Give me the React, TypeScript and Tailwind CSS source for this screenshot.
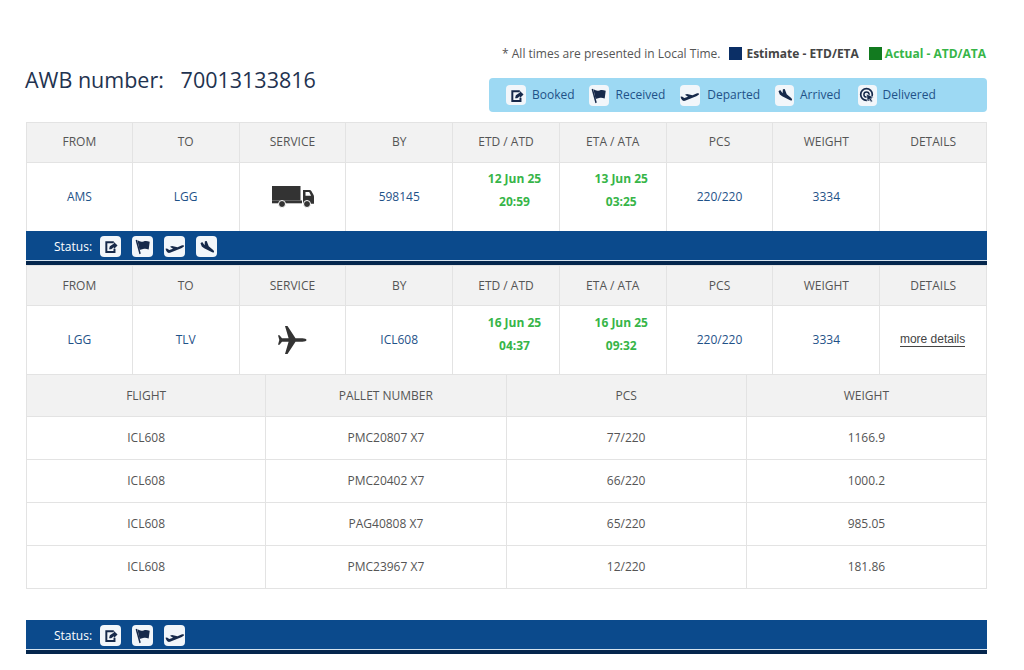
import React from "react";

const F = '[font-family:"Open_Sans",sans-serif]';
const C = "#16294a";

function Booked() {
  return (
    <svg viewBox="0 0 16 16" className="w-[15px] h-[15px]">
      <path d="M2.500 2.500h9v2H4.600v8.300h6.600v-2.400h2.100v4.500h-10.800z" fill={C} />
      <path d="M6.500 11l.8-3.200 4.400-3V3.200L15.500 7l-3.800 3.600V8.900l-3 2.100z" fill={C} />
    </svg>
  );
}
function Flag() {
  return (
    <svg viewBox="0 0 16 16" className="w-[17px] h-[17px]">
      <path d="M1.500 2.200l1.300-.5 3.600 13-1.300.5z" fill={C} />
      <path d="M3.200 2.200c2.300 1.400 3.800 1.500 5.800 1 1.800-.4 3.400-.4 5.800.4l-1 7.200c-2.300-.9-3.800-.8-5.300-.4-1.300.3-2.200.5-3.200.8z" fill={C} />
    </svg>
  );
}
function Departed() {
  return (
    <svg viewBox="0 0 20 16" className="w-[20px] h-[16px]">
      <path d="M.5 9.800l1.500-.4 2.300 1.600 3.700-1.300-3-2 2-.6 5.500 1.200 4-1.700c1.300-.6 2.400-.5 2.600.2.200.7-.8 1.500-2.200 2.100L5 13.800c-1.800.5-3.400-.4-4.500-4z" fill={C} />
    </svg>
  );
}
function Arrived() {
  return (
    <svg viewBox="0 0 16 16" className="w-[16px] h-[16px]">
      <path d="M1.500 4.200L3.200 3l2.400 3.200.3-3.900L7.700 2l2 5.300 4.200 3.400c1.100.9 1.500 2 1 2.500-.5.500-1.700.2-2.800-.4L5.200 9.300 2.800 7.500z" fill={C} />
    </svg>
  );
}
function Delivered() {
  return (
    <svg viewBox="0 0 16 16" className="w-[16px] h-[16px]">
      <circle cx="7.500" cy="7.500" r="5.800" fill="none" stroke={C} strokeWidth="1.700" />
      <circle cx="7.500" cy="7.500" r="2.600" fill="none" stroke={C} strokeWidth="1.500" />
      <path d="M7.500 7l7 3.200-2.700 1.100 1.700 3-1.600.9-1.600-3-2 1.800z" fill={C} stroke="#eef6fb" strokeWidth=".6" />
    </svg>
  );
}
function Truck() {
  return (
    <svg viewBox="0 0 42 22" className="w-[42px] h-[22px] ml-[1px]">
      <rect x="0" y="0" width="28.500" height="14.500" fill="#333" />
      <rect x="0" y="14.500" width="30" height="2.800" fill="#333" />
      <path d="M31 4h6.500c.9 0 1.500.4 2 1.200l1.800 3.400c.4.700.7 1.300.7 2.100v7.100H31z" fill="#333" />
      <path d="M33.500 6h3.700l1.900 3.800h-5.600z" fill="#fff" />
      <circle cx="10" cy="18" r="3.500" fill="#333" stroke="#fff" strokeWidth="1" />
      <circle cx="35" cy="18" r="3.500" fill="#333" stroke="#fff" strokeWidth="1" />
    </svg>
  );
}
function Plane() {
  return (
    <svg viewBox="0 0 30 30" className="w-[30px] h-[30px]">
      <path d="M29.500 15c0-.9-2-1.700-4-1.700h-7L10.500 1H8l3.600 12.300H5L2.500 10.300H1L2.300 15 1 19.700h1.500L5 16.700h6.600L8 29h2.500l8-12.300h7c2 0 4-.8 4-1.700z" fill="#333" />
    </svg>
  );
}

function IconBox({ children, size = "w-[21px] h-[21px]" }: { children: React.ReactNode; size?: string }) {
  return <span className={`${size} bg-[#f2f6fa] rounded-[4px] flex items-center justify-center shrink-0`}>{children}</span>;
}

const Head = ["FROM", "TO", "SERVICE", "BY", "ETD / ATD", "ETA / ATA", "PCS", "WEIGHT", "DETAILS"];

function Cell({ children, cls = "" }: { children?: React.ReactNode; cls?: string }) {
  return <div className={`flex items-center justify-center border-r border-[#e3e3e3] first:border-l ${cls}`}>{children}</div>;
}

function Time({ d, t, cls }: { d: string; t: string; cls: string }) {
  return (
    <div className={`text-center font-bold text-[12px] text-[#37b548] leading-[23px] pl-[17px] ${cls}`}>
      <div>{d}</div>
      <div>{t}</div>
    </div>
  );
}

function Shipment({ from, to, icon, by, etd, etdT, eta, etaT, details, headCls = "", timeCls }: { from: string; to: string; icon: React.ReactNode; by: string; etd: string; etdT: string; eta: string; etaT: string; details?: React.ReactNode; headCls?: string; timeCls: string }) {
  const Link = "text-[#1f5288] text-[12px]";
  return (
    <div>
      <div className="grid grid-cols-9 h-[41px] bg-[#f2f2f2] border-y border-[#e3e3e3] text-[12px] text-[#555]">
        {Head.map((h) => <Cell key={h} cls={headCls}>{h}</Cell>)}
      </div>
      <div className="grid grid-cols-9 h-[68px] bg-white">
        <Cell cls={Link}>{from}</Cell>
        <Cell cls={Link}>{to}</Cell>
        <Cell>{icon}</Cell>
        <Cell cls={Link}>{by}</Cell>
        <Cell><Time d={etd} t={etdT} cls={timeCls} /></Cell>
        <Cell><Time d={eta} t={etaT} cls={timeCls} /></Cell>
        <Cell cls={Link}>220/220</Cell>
        <Cell cls={Link}>3334</Cell>
        <Cell>{details}</Cell>
      </div>
    </div>
  );
}

function Status({ icons }: { icons: React.ReactNode[] }) {
  return (
    <div className="bg-[#0b4a8c]">
      <div className="h-[29px] flex items-center pl-[28px] pt-[2px] gap-[11px]">
        <span className="text-white text-[12px] mr-[-3px]">Status:</span>
        {icons.map((ic, i) => <IconBox key={i}>{ic}</IconBox>)}
      </div>
      <div className="h-[1px] bg-[#d5e3ef]" />
      <div className="h-[4px] bg-[#04264d]" />
    </div>
  );
}

const pallets = [
  ["ICL608", "PMC20807 X7", "77/220", "1166.9"],
  ["ICL608", "PMC20402 X7", "66/220", "1000.2"],
  ["ICL608", "PAG40808 X7", "65/220", "985.05"],
  ["ICL608", "PMC23967 X7", "12/220", "181.86"],
];

export default function App() {
  return (
    <div className={`${F} w-[1024px] h-[670px] overflow-hidden bg-white pt-[45px] pl-[26px] pr-[37px] text-[#555]`}>
      <div className="flex justify-between h-[77px]">
        <div className="pt-[20px] text-[21.500px] text-[#1f3350] ml-[-1px] whitespace-pre leading-[29px]">AWB number:   70013133816</div>
        <div className="flex flex-col items-end">
          <div className="flex items-center h-[17px] text-[12px] whitespace-nowrap mr-[1px]">
            <span className="text-[#555]">* All times are presented in Local Time.</span>
            <span className="w-[13px] h-[13px] bg-[#0b2f66] ml-[9px] mr-[4px]" />
            <span className="font-bold text-[#444]">Estimate - ETD/ETA</span>
            <span className="w-[13px] h-[13px] bg-[#127a1f] ml-[10px] mr-[3px]" />
            <span className="font-bold text-[#37b548]">Actual - ATD/ATA</span>
          </div>
          <div className="mt-[16px] w-[498px] h-[34px] bg-[#9dd9f3] rounded-[4px] flex items-center pl-[17px] text-[12px] text-[#1f5288]">
            <IconBox size="w-[20px] h-[20px]"><Booked /></IconBox>
            <span className="ml-[6px]">Booked</span>
            <span className="ml-[14px]"><IconBox size="w-[20px] h-[21px]"><Flag /></IconBox></span>
            <span className="ml-[7px]">Received</span>
            <span className="ml-[15px]"><IconBox size="w-[20px] h-[21px]"><Departed /></IconBox></span>
            <span className="ml-[7px]">Departed</span>
            <span className="ml-[15px]"><IconBox size="w-[19px] h-[21px]"><Arrived /></IconBox></span>
            <span className="ml-[6px]">Arrived</span>
            <span className="ml-[17px]"><IconBox size="w-[19px] h-[21px]"><Delivered /></IconBox></span>
            <span className="ml-[6px]">Delivered</span>
          </div>
        </div>
      </div>

      <Shipment from="AMS" to="LGG" icon={<Truck />} by="598145" etd="12 Jun 25" etdT="20:59" eta="13 Jun 25" etaT="03:25" headCls="pb-[2px]" timeCls="pb-[14px]" />
      <Status icons={[<Booked key="a" />, <Flag key="b" />, <Departed key="c" />, <Arrived key="d" />]} />
      <Shipment from="LGG" to="TLV" icon={<Plane />} by="ICL608" etd="16 Jun 25" etdT="04:37" eta="16 Jun 25" etaT="09:32" timeCls="pb-[12px]"
        details={<span className='[font-family:"Liberation_Sans",sans-serif] text-[12px] text-[#444] border-b border-[#444] leading-[13px] -mt-[1px] -ml-[1px]'>more details</span>} />

      <div className="border-y border-[#e3e3e3] text-[12px] text-[#555]">
        <div className="grid grid-cols-4 h-[41px] bg-[#f2f2f2]">
          {["FLIGHT", "PALLET NUMBER", "PCS", "WEIGHT"].map((h) => <Cell key={h}>{h}</Cell>)}
        </div>
        {pallets.map((r) => (
          <div key={r[1]} className="grid grid-cols-4 h-[43px] border-t border-[#e3e3e3]">
            {r.map((v, i) => <Cell key={i}>{v}</Cell>)}
          </div>
        ))}
      </div>

      <div className="mt-[31px]">
        <Status icons={[<Booked key="a" />, <Flag key="b" />, <Departed key="c" />]} />
      </div>
    </div>
  );
}
